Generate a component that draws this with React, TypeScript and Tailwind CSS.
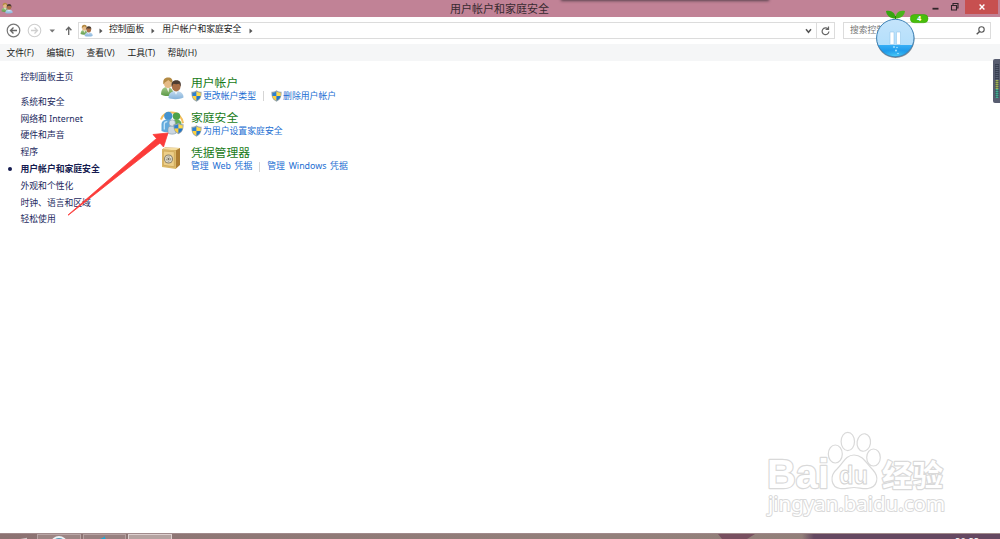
import type { ReactNode } from "react";

interface PanelItemProps {
  title: string;
  links: string[];
  shield?: boolean;
  icon: ReactNode;
}

const menus = [
  { label: "文件(F)", width: "w-[40px]" },
  { label: "编辑(E)", width: "w-[40px]" },
  { label: "查看(V)", width: "w-[41px]" },
  { label: "工具(T)", width: "w-[40px]" },
  { label: "帮助(H)", width: "w-[40px]" },
];

const categories = [
  "系统和安全",
  "网络和 Internet",
  "硬件和声音",
  "程序",
  "用户帐户和家庭安全",
  "外观和个性化",
  "时钟、语言和区域",
  "轻松使用",
];

function UsersIcon({ className }: { className: string }) {
  return (
    <svg className={className} viewBox="0 0 24 24">
      <defs>
        <linearGradient id="greenShirt" x1="0" y1="0" x2="0" y2="1">
          <stop offset="0" stopColor="#a5c98a" />
          <stop offset="1" stopColor="#5c9a48" />
        </linearGradient>
        <linearGradient id="blueShirt" x1="0" y1="0" x2="0" y2="1">
          <stop offset="0" stopColor="#c5dcf0" />
          <stop offset="1" stopColor="#84b2da" />
        </linearGradient>
      </defs>
      <path d="M1 18.500c0-4.500 2-7.500 6-7.500s6 3 7 7.500c-4 2-9 2-13 0z" fill="url(#greenShirt)" />
      <path d="M6 11h3.500l-1 5.500z" fill="#f0f2e8" />
      <ellipse cx="8" cy="7.200" rx="4.100" ry="4.900" fill="#e5bb87" />
      <path d="M3.500 8.500c-1-4.500 1-7 4.600-7 3.300 0 4.900 2 4.300 5.300-1.800-.7-3-1.600-4-2.800C7 5.200 5.500 6 4.800 6.500z" fill="#b38a44" />
      <path d="M8.500 22c0-5 3-7 7.500-7s7.500 2.500 7.500 6.500c-3.500 2-11.500 2.200-15 .5z" fill="url(#blueShirt)" />
      <path d="M14 14.800h4l-2 4z" fill="#edf4fb" />
      <ellipse cx="16.200" cy="10.500" rx="4.300" ry="5" fill="#a96f46" />
      <path d="M11.800 11c-1-4.500 1-6.800 4.500-6.800 3.700 0 5.300 2.500 4.300 6.600l-1.300-3c-2 .5-4 .4-6 0z" fill="#4c3c31" />
    </svg>
  );
}

function ShieldIcon({ className }: { className: string }) {
  return (
    <svg className={className} viewBox="0 0 12 13">
      <path d="M6 .3C4.500 1.500 2.500 1.900.5 1.900c-.2 5.300 1 8.600 5.500 10.800 4.500-2.200 5.700-5.500 5.500-10.800-2 0-4-.4-5.500-1.600z" fill="#98a4ab" />
      <path d="M6 1.500C4.900 2.400 3.500 2.800 1.500 2.900v3.800H6z" fill="#2d80d0" />
      <path d="M6 1.500c1.100.9 2.500 1.300 4.500 1.400v3.800H6z" fill="#ffdb49" />
      <path d="M1.600 6.600c.4 2.300 1.900 4 4.400 5.100V6.600z" fill="#ffd13b" />
      <path d="M10.400 6.600c-.4 2.300-1.900 4-4.400 5.100V6.600z" fill="#2476c8" />
    </svg>
  );
}

function FamilyIcon() {
  return (
    <div className="relative h-6 w-6">
      <svg className="h-6 w-6" viewBox="0 0 24 24">
        <path d="M1 8.500C3 3 8 .8 14 1.800c5 1 8 5 9 10.500" fill="none" stroke="#f4be5c" strokeWidth="2" />
        <circle cx="16.500" cy="5.300" r="3.700" fill="#4fa24a" />
        <path d="M12 16v-3.500c0-2.700 2-4 4.800-4s4.700 1.500 4.700 4.500v3z" fill="#63ad58" />
        <circle cx="8.300" cy="5" r="4.200" fill="#4593cf" />
        <path d="M1.500 20v-6.500c0-3.500 2.500-5 6.500-5s5.500 1.500 5.500 4.500v6c-3 2.500-8 3-12 1z" fill="#62a9dc" />
        <path d="M4.300 18.500v-5.500c0-1.500 1-2.300 3-2.300" fill="none" stroke="#c5e5f8" strokeWidth="1.300" />
        <path d="M8 22v-3.700c0-2.300 1.500-3.300 4-3.300s4 1 4 3.300v4c-2.500 1.200-6 1.200-8-.3z" fill="#cbd6df" stroke="#849aac" strokeWidth=".6" />
        <circle cx="12.200" cy="12" r="3.200" fill="#dae2e9" stroke="#849aac" strokeWidth=".6" />
      </svg>
      <ShieldIcon className="absolute bottom-0 right-0 h-[13px] w-[11px]" />
    </div>
  );
}

function SafeIcon() {
  return (
    <svg className="h-6 w-6" viewBox="0 0 24 24">
      <path d="M2 3.500L5 1.500l15 .5v17l-4.500 4z" fill="#ad7d32" />
      <path d="M2 3.500L5 1.500l15 .5-4 2.300z" fill="#f4dda0" />
      <path d="M2 3.500l14 .8V23L2 21z" fill="#dcb969" />
      <path d="M3.300 5l11 .8v15l-11-1.600z" fill="#edcf89" stroke="#c69c4c" strokeWidth=".6" />
      <circle cx="8.500" cy="13" r="4.500" fill="#8b816a" />
      <circle cx="8.500" cy="13" r="3.500" fill="#e3dfce" />
      <circle cx="8.500" cy="13" r="2.200" fill="none" stroke="#8e8877" strokeWidth="1" strokeDasharray="1.500 .8" />
      <circle cx="8.500" cy="13" r="1.100" fill="#6f695b" />
    </svg>
  );
}

function Crumb() {
  return (
    <svg className="h-[6px] w-[4px] shrink-0" viewBox="0 0 4 6">
      <path d="M.5.500L3.500 3 .5 5.500z" fill="#555" />
    </svg>
  );
}

function PanelItem({ title, links, shield, icon }: PanelItemProps) {
  return (
    <div className="flex h-[35.200px]">
      <div className="w-[31.500px] shrink-0 pt-[1px]">{icon}</div>
      <div>
        <h2 className="h-[15.300px] text-[11.800px] leading-[14px] text-[#177a17]">{title}</h2>
        <div className="flex h-[13px] items-center text-[8.850px] leading-[13px] text-[#1b6ed2]">
          {links.map((link, i) => (
            <div key={link} className="flex items-center">
              {i > 0 && <span className="mx-[7px] h-[10px] w-px bg-[#d5d5d5]" />}
              {shield && <ShieldIcon className="-mt-px mr-[1px] h-[12px] w-[11px]" />}
              <span className="[word-spacing:1.400px]">{link}</span>
            </div>
          ))}
        </div>
      </div>
    </div>
  );
}

function TitleBar() {
  return (
    <header className="flex h-[17px] items-start bg-[#c18296]">
      <div className="flex w-[60px] pl-[0.500px] pt-[1.500px]">
        <UsersIcon className="h-[12px] w-[12px]" />
      </div>
      <h1 className="flex-1 pl-[9px] text-center text-[11px] leading-[17px] text-[#382a30]">用户帐户和家庭安全</h1>
      <div className="flex w-[70px] items-start">
        <svg className="h-[14px] w-[35px]" viewBox="0 0 35 14">
          <path d="M2.500 8.700h6" stroke="#30252a" strokeWidth="1.800" />
          <path d="M21.500 5.500h5v4.500h-5zM23 5V3.500h5V8h-1" fill="none" stroke="#30252a" strokeWidth="1.100" />
        </svg>
        <div className="flex h-[14px] w-[33px] items-center justify-center bg-[#c75050]">
          <svg className="h-[6px] w-[6px]" viewBox="0 0 6 6">
            <path d="M.6.600l4.800 4.800M5.400.600L.6 5.400" stroke="white" strokeWidth="1.400" />
          </svg>
        </div>
      </div>
    </header>
  );
}

function AddressBar() {
  return (
    <div className="flex h-[27px] items-center bg-white pl-[6px] pr-[9px] text-[8.800px] text-[#222]">
      <svg className="h-[16px] w-[72px] shrink-0 self-center" viewBox="0 0 72 16" fill="none">
        <circle cx="7.500" cy="7.500" r="6.300" stroke="#777" strokeWidth="1.200" />
        <path d="M11 7.500H4.500M7.500 4.500l-3 3 3 3" stroke="#666" strokeWidth="1.400" />
        <circle cx="28.500" cy="7.500" r="6.300" stroke="#cfcfcf" strokeWidth="1.100" />
        <path d="M25 7.500h6.500M28.500 4.500l3 3-3 3" stroke="#cfcfcf" strokeWidth="1.300" />
        <path d="M43.500 6.500h5.500L46.200 9.500z" fill="#777" />
        <path d="M62.700 12V4.500M60 7.200l2.700-3 2.700 3" stroke="#666" strokeWidth="1.300" />
      </svg>
      <div className="flex h-[17px] flex-1 items-center border border-[#dcdcdc]">
        <UsersIcon className="ml-[1px] h-[13px] w-[13px]" />
        <span className="ml-[5.500px]"><Crumb /></span>
        <span className="-mt-[1.500px] ml-[6.500px] leading-[13px]">控制面板</span>
        <span className="ml-[7px]"><Crumb /></span>
        <span className="-mt-[1.500px] ml-[7px] leading-[13px]">用户帐户和家庭安全</span>
        <span className="ml-[7.500px]"><Crumb /></span>
        <svg className="ml-auto mr-[4px] h-[6px] w-[7px]" viewBox="0 0 7 6" fill="none">
          <path d="M1 1.300l2.500 3 2.500-3" stroke="#555" strokeWidth="1.500" />
        </svg>
        <div className="flex h-full w-[18px] items-center justify-center border-l border-[#dcdcdc]">
          <svg className="h-[10px] w-[9px]" viewBox="0 0 9 10" fill="none">
            <path d="M7 3A3.400 3.400 0 1 0 7.900 5.500M7.500.500v3H4.600" stroke="#666" strokeWidth="1.200" />
          </svg>
        </div>
      </div>
      <div className="ml-[8px] flex h-[17px] w-[148px] items-center justify-between border border-[#dcdcdc] pl-[6px] pr-[5px] text-[#777]">
        {/* The floating ball covers the end of this placeholder */}
        <span className="leading-[15px]">搜索控制</span>
        <svg className="h-[9px] w-[9px]" viewBox="0 0 9 9" fill="none">
          <circle cx="5.500" cy="3.500" r="2.700" stroke="#555" strokeWidth="1.100" />
          <path d="M3.600 5.400L.7 8.300" stroke="#555" strokeWidth="1.400" />
        </svg>
      </div>
    </div>
  );
}

function Sidebar() {
  return (
    <nav className="w-[159.500px] shrink-0 pt-[8px] text-[8.800px] leading-[16.800px] text-[#232a60]">
      <div className="mb-[8.100px] pl-[20.500px]">控制面板主页</div>
      {categories.map((name) => {
        const active = name === "用户帐户和家庭安全";
        return (
          <div key={name} className={`flex h-[16.800px] items-center ${active ? "font-bold text-[#151b50]" : ""}`}>
            <span className="w-[20.500px] shrink-0 pl-[8px]">
              {active && <span className="block h-[4px] w-[4px] rounded-full bg-[#151b50]" />}
            </span>
            <span>{name}</span>
          </div>
        );
      })}
    </nav>
  );
}

function Floater() {
  return (
    <svg className="absolute left-[870px] top-[7px] h-[54px] w-[64px]" viewBox="0 0 64 54">
      <defs>
        <linearGradient id="bubble" x1="0" y1="0" x2="0" y2="1">
          <stop offset="0" stopColor="#c4e4fb" />
          <stop offset=".69" stopColor="#b4dffb" />
          <stop offset=".7" stopColor="#35adf5" />
          <stop offset="1" stopColor="#0686df" />
        </linearGradient>
        <radialGradient id="glow" cx=".5" cy="1" r=".6">
          <stop offset="0" stopColor="#5adcff" stopOpacity=".8" />
          <stop offset="1" stopColor="#5adcff" stopOpacity="0" />
        </radialGradient>
      </defs>
      <circle cx="25.500" cy="32" r="19" fill="#55636e" opacity=".7" />
      <circle cx="25.300" cy="31" r="18.700" fill="url(#bubble)" stroke="#3e83b7" strokeWidth="1" />
      <path d="M9 39h32.500c-4 13-28 14-32.500 0z" fill="url(#glow)" />
      <path d="M20 25h4v12.500h-4zM26.500 25h4v12.500h-4z" fill="white" stroke="#93c8ed" strokeWidth=".6" />
      <g fill="#a9e3ff">
        <circle cx="24" cy="40" r=".9" />
        <circle cx="27" cy="40.500" r=".8" />
        <circle cx="26" cy="43.500" r="1" />
        <circle cx="28" cy="46.500" r=".8" />
      </g>
      <path d="M25.500 11.500c-5 0-9-2.500-9.500-7.500 5-1.200 9.500 1.500 9.500 7.500z" fill="#36a511" />
      <path d="M25.500 11.500c0-5.500 3.500-9 9.500-7.500-.5 5-4.500 7.500-9.500 7.500z" fill="#49b51b" />
      <path d="M25.500 12V9" stroke="#278408" />
      <rect x="40.300" y="7.500" width="17.700" height="8.200" rx="4" fill="#48be0b" stroke="#32a000" strokeWidth=".5" />
      <text x="49.200" y="14.300" textAnchor="middle" fontSize="7.500" fill="white" fontWeight="bold">4</text>
    </svg>
  );
}

function Gauge() {
  return (
    <svg className="absolute left-[993px] top-[59px] h-[44px] w-[7px]" viewBox="0 0 7 44">
      <rect x="0" y="0" width="10" height="44" rx="2" fill="#585d70" />
      <path d="M2 5h4v34H2z" fill="#383f50" />
      <path d="M4 6v15" stroke="#596174" strokeWidth="3" strokeDasharray="1 1" />
      <path d="M4 21v9" stroke="#9fb255" strokeWidth="3" strokeDasharray="1.500 .5" />
      <path d="M4 30v9" stroke="#44ac92" strokeWidth="3" strokeDasharray="1.500 .5" />
    </svg>
  );
}

function Watermark() {
  return (
    <svg
      className="absolute left-[760px] top-[425px] h-[100px] w-[195px] font-['Liberation_Sans','Noto_Sans_CJK_SC',sans-serif]"
      viewBox="0 0 195 100"
      fill="white"
      stroke="#d9d9d9"
      strokeLinejoin="round"
      strokeWidth="1.200"
    >
      <g fontWeight="bold" paintOrder="stroke" strokeWidth="2.400">
        <text x="7" y="62.500" fontSize="41" textLength="62" lengthAdjust="spacingAndGlyphs">Bai</text>
        <text x="122" y="60.500" fontSize="30" textLength="61" lengthAdjust="spacingAndGlyphs">经验</text>
      </g>
      <ellipse cx="75.300" cy="29" rx="7" ry="9" />
      <ellipse cx="87.800" cy="16.500" rx="6.700" ry="9.200" />
      <ellipse cx="103.800" cy="17.500" rx="6.700" ry="8.800" transform="rotate(9 103.800 17.500)" />
      <ellipse cx="113.500" cy="32.500" rx="6.800" ry="8.500" />
      <path d="M94 30c-8 0-11 8-17 14-8 7-6 18 3 19.500 5 .8 9-1 14-1s9 1.800 14 1c9-1.500 12-11 5-18.500-7-7-10-15-19-15z" />
      <text x="79" y="58.500" fontSize="26" textLength="29" lengthAdjust="spacingAndGlyphs" fontWeight="bold" stroke="#d3d3d3" strokeWidth="1">du</text>
      <text
        className="font-['Noto_Sans',sans-serif]"
        x="8"
        y="85.500"
        fontSize="20.500"
        textLength="177"
        lengthAdjust="spacingAndGlyphs"
        paintOrder="stroke"
        strokeWidth="2"
      >
        jingyan.baidu.com
      </text>
    </svg>
  );
}

function Taskbar() {
  return (
    <footer className="flex h-[6px] overflow-hidden border-t border-[#a18b8c] bg-linear-to-r from-[#8c7272] via-[#93807b] via-60% to-[#927f79]">
      <div className="w-[37px] shrink-0">
        <svg className="ml-[16px] h-[5px] w-[12px]" viewBox="0 0 12 5">
          <path d="M4 5l7-1.200V5z" fill="#d5c7c8" />
        </svg>
      </div>
      <div className="flex w-[43.500px] shrink-0 justify-center border border-b-0 border-[#b9a6a6] bg-[#9d8584]">
        <svg className="h-[4px] w-[18px]" viewBox="0 0 18 4">
          <ellipse cx="9" cy="7.500" rx="7" ry="5.500" fill="#5a9ab7" stroke="#edf4f6" strokeWidth="1.800" />
        </svg>
      </div>
      <div className="ml-[2px] flex w-[43px] shrink-0 justify-center border border-b-0 border-[#b5a1a1] bg-[#988080]">
        <svg className="h-[4px] w-[12px]" viewBox="0 0 12 4">
          <path d="M2 4Q6 3 7 1v2L8 4z" fill="#16aad8" />
        </svg>
      </div>
      <div className="ml-[2px] w-[44px] shrink-0 border border-b-0 border-[#ded1d0] bg-[#b5a3a1]" />
      <div className="flex-1" />
      <svg className="h-[5px] w-[300px] shrink-0" viewBox="0 0 300 5">
        <defs>
          <linearGradient id="dusk" x1="0" y1="0" x2="1" y2="0">
            <stop offset="0" stopColor="#654861" stopOpacity="0" />
            <stop offset=".06" stopColor="#654861" />
            <stop offset="1" stopColor="#654861" />
          </linearGradient>
        </defs>
        <path d="M18 0h37l-8 5H22z" fill="#785060" />
        <path d="M102 0h198v5H102z" fill="url(#dusk)" />
        <text x="255" y="11" fill="white" fontSize="9.500">20:22</text>
      </svg>
    </footer>
  );
}

export default function App() {
  return (
    <div className="relative flex h-[539px] w-[1000px] flex-col overflow-hidden bg-white font-['Noto_Sans','Noto_Sans_CJK_SC',sans-serif] whitespace-nowrap">
      <TitleBar />
      <AddressBar />
      <div className="flex h-[17px] items-center bg-[#f5f6f7] pl-[6.500px] font-['Open_Sans','Noto_Sans_CJK_SC',sans-serif] text-[8.800px] leading-[17px] text-[#202020]">
        {menus.map((menu) => (
          <span key={menu.label} className={`shrink-0 pt-px ${menu.width}`}>{menu.label}</span>
        ))}
      </div>
      <div className="flex min-h-0 flex-1">
        <Sidebar />
        <main className="pt-[13.500px]">
          <PanelItem title="用户帐户" links={["更改帐户类型", "删除用户帐户"]} shield icon={<UsersIcon className="h-6 w-6" />} />
          <PanelItem title="家庭安全" links={["为用户设置家庭安全"]} shield icon={<FamilyIcon />} />
          <PanelItem title="凭据管理器" links={["管理 Web 凭据", "管理 Windows 凭据"]} icon={<SafeIcon />} />
        </main>
      </div>
      <Taskbar />

      {/* Things floating over the window */}
      <div className="absolute left-[562px] top-[-4px] h-[4px] w-[206px] shadow-[0_0_3px_1px_#59414c]" />
      <svg className="absolute left-[64px] top-[128px] h-[90px] w-[108px]" viewBox="0 0 108 90">
        <path d="M4 87L92.500 10.500l-3.500-4L104 5l-4.500 14-3.500-4L4.500 87z" fill="#fb3b39" stroke="#fb3b39" strokeWidth=".8" />
      </svg>
      <Floater />
      <Gauge />
      <Watermark />
    </div>
  );
}
